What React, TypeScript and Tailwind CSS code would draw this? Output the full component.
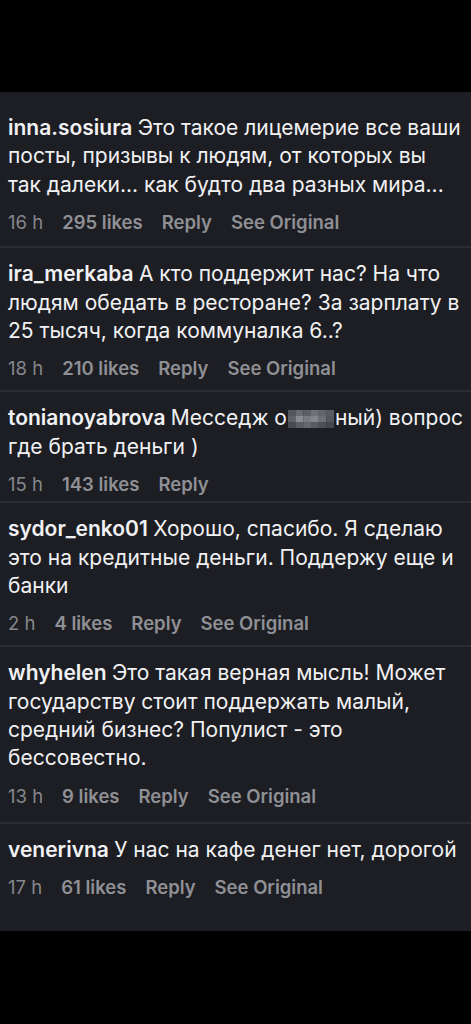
import React from "react";

type C = {
  user: string;
  lines: React.ReactNode[];
  time: string;
  likes: string;
  original?: boolean;
  pb: string;
};

const cells = [
  "#55565b","#6a6b70","#5e5f64","#707176","#65666b","#5a5b60",
  "#606166","#8a8b90","#7a7b80","#85868b","#6e6f74","#55565b",
  "#4a4b50","#5c5d62","#66676c","#5a5b60","#4f5055","#46474c",
];

const Blur = () => (
  <svg
    width="46"
    height="18"
    viewBox="0 0 6 3"
    preserveAspectRatio="none"
    className="inline-block align-[-3px] mx-[1px]"
  >
    {cells.map((c, i) => (
      <rect key={i} x={i % 6} y={Math.floor(i / 6)} width="1.02" height="1.02" fill={c} />
    ))}
  </svg>
);

const comments: C[] = [
  {
    user: "inna.sosiura",
    lines: [
      "Это такое лицемерие все ваши",
      "посты, призывы к людям, от которых вы",
      "так далеки... как будто два разных мира...",
    ],
    time: "16 h",
    likes: "295 likes",
    original: true,
    pb: "pb-[13px]",
  },
  {
    user: "ira_merkaba",
    lines: [
      "А кто поддержит нас? На что",
      "людям обедать в ресторане? За зарплату в",
      "25 тысяч, когда коммуналка 6..?",
    ],
    time: "18 h",
    likes: "210 likes",
    original: true,
    pb: "pb-[11px]",
  },
  {
    user: "tonianoyabrova",
    lines: [
      <>
        Месседж о<Blur />ный) вопрос
      </>,
      "где брать деньги )",
    ],
    time: "15 h",
    likes: "143 likes",
    pb: "pb-[6px]",
  },
  {
    user: "sydor_enko01",
    lines: [
      "Хорошо, спасибо. Я сделаю",
      "это на кредитные деньги. Поддержу еще и",
      "банки",
    ],
    time: "2 h",
    likes: "4 likes",
    original: true,
    pb: "pb-[11px]",
  },
  {
    user: "whyhelen",
    lines: [
      "Это такая верная мысль! Может",
      "государству стоит поддержать малый,",
      "средний бизнес? Популист - это",
      "бессовестно.",
    ],
    time: "13 h",
    likes: "9 likes",
    original: true,
    pb: "pb-[15px]",
  },
  {
    user: "venerivna",
    lines: ["У нас на кафе денег нет, дорогой"],
    time: "17 h",
    likes: "61 likes",
    original: true,
    pb: "pb-[14px]",
  },
];

export default function App() {
  return (
    <div
      className="w-[471px] h-[1024px] bg-black flex flex-col"
      style={{ fontFamily: "Inter, 'Noto Sans', 'Liberation Sans', sans-serif" }}
    >
      <div className="h-[92px] shrink-0" />
      <div className="bg-[#1d1e23] pt-[10px] pb-[19px]">
        {comments.map((c, i) => (
          <div
            key={i}
            className={
              "px-[8px] pt-[12px] " +
              c.pb +
              " " +
              (i < comments.length - 1 ? "border-b-[2px] border-[#2b2c32]" : "")
            }
          >
            <div className="text-[21px] leading-[28.4px] text-[#f1f1f3]">
              {c.lines.map((l, j) => (
                <div key={j} className="whitespace-nowrap h-[28.4px]">
                  {j === 0 && <span className="font-semibold">{c.user} </span>}
                  {l}
                </div>
              ))}
            </div>
            <div className="mt-[12px] flex items-center gap-[19px] text-[18.5px] leading-[22px] text-[#8f9095]">
              <span className="font-normal text-[#86878c]">{c.time}</span>
              <span className="font-semibold">{c.likes}</span>
              <span className="font-semibold">Reply</span>
              {c.original && <span className="font-semibold">See Original</span>}
            </div>
          </div>
        ))}
      </div>
    </div>
  );
}
